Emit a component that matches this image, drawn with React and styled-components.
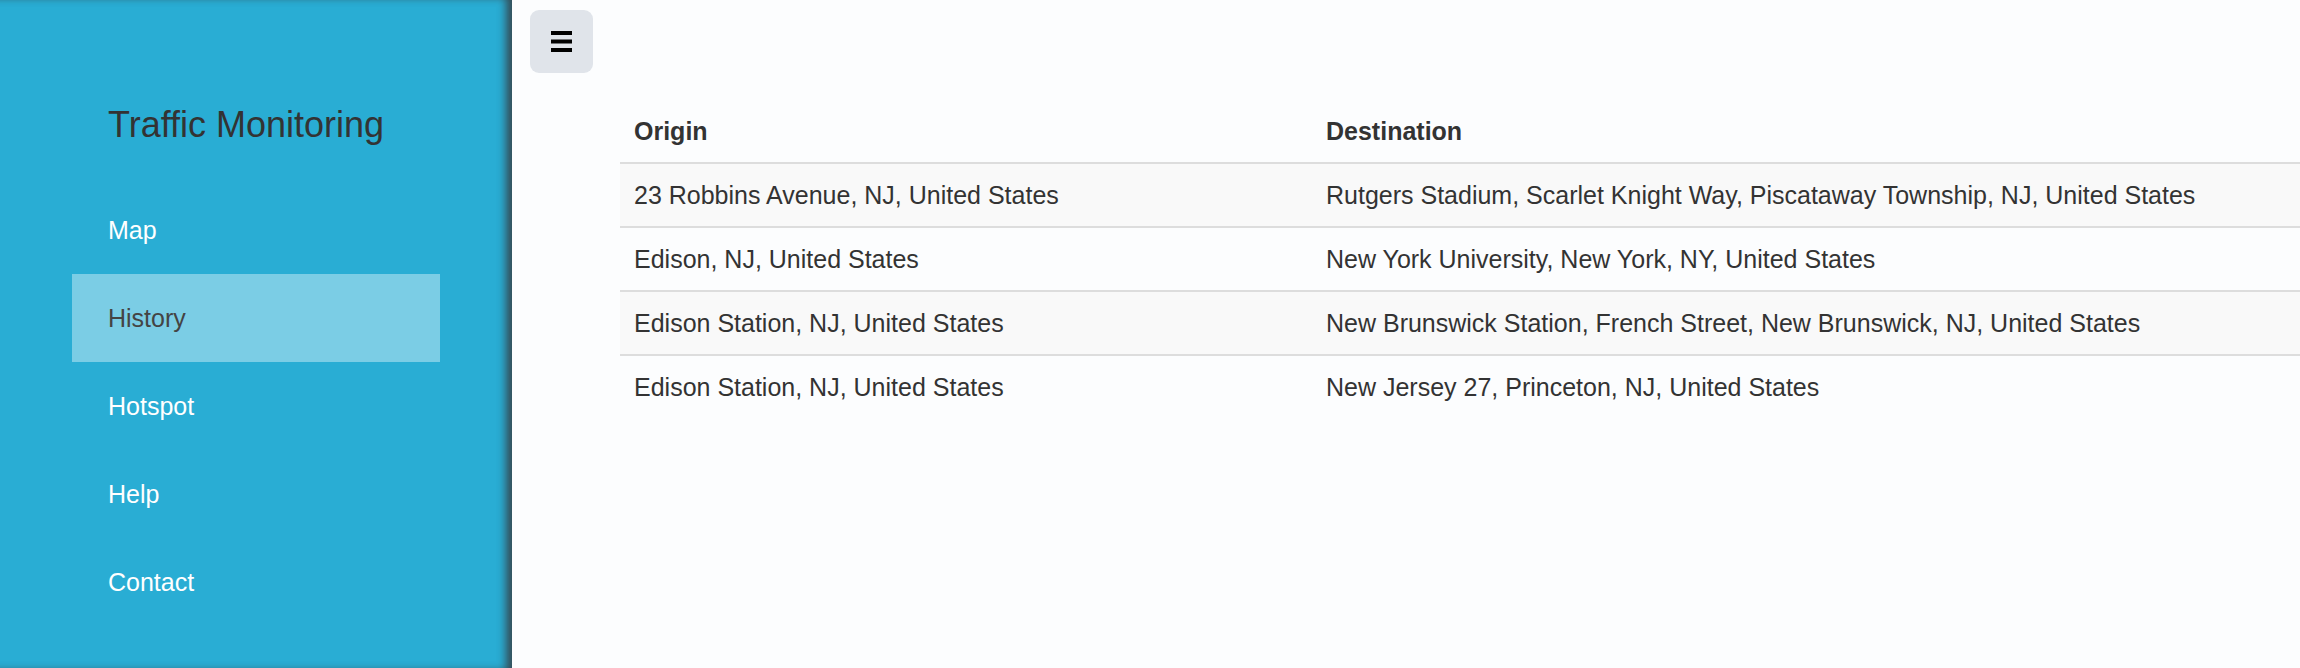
import React, { useState } from 'react';
import styled, { createGlobalStyle } from 'styled-components';

const trips = [
    { origin: '23 Robbins Avenue, NJ, United States', destination: 'Rutgers Stadium, Scarlet Knight Way, Piscataway Township, NJ, United States' },
    { origin: 'Edison, NJ, United States', destination: 'New York University, New York, NY, United States' },
    { origin: 'Edison Station, NJ, United States', destination: 'New Brunswick Station, French Street, New Brunswick, NJ, United States' },
    { origin: 'Edison Station, NJ, United States', destination: 'New Jersey 27, Princeton, NJ, United States' },
];

const links = [ 'Map', 'History', 'Hotspot', 'Help', 'Contact' ];

const App = () => {

    const [ active, setActive ] = useState('History');

    return (
        <>
            <GlobalStyle />
            <Page>
                <Sidebar>
                    <Brand>Traffic Monitoring</Brand>
                    <NavList>
                        { links.map((link) => (
                            <NavItem key={ link } $active={ link === active } onClick={ () => setActive(link) }>
                                { link }
                            </NavItem>
                        )) }
                    </NavList>
                </Sidebar>
                <Main>
                    <MenuButton aria-label="Toggle menu">
                        <svg width="21" height="21" viewBox="0 0 21 21">
                            <rect x="0" y="0" width="21" height="4" fill="#000" />
                            <rect x="0" y="8.5" width="21" height="4" fill="#000" />
                            <rect x="0" y="17" width="21" height="4" fill="#000" />
                        </svg>
                    </MenuButton>
                    <Table>
                        <thead>
                            <tr>
                                <Th $first>Origin</Th>
                                <Th>Destination</Th>
                            </tr>
                        </thead>
                        <tbody>
                            { trips.map((trip, i) => (
                                <Row key={ i } $striped={ i % 2 === 0 }>
                                    <Td>{ trip.origin }</Td>
                                    <Td>{ trip.destination }</Td>
                                </Row>
                            )) }
                        </tbody>
                    </Table>
                </Main>
            </Page>
        </>
    );
};

export default App;

const GlobalStyle = createGlobalStyle`
    html, body, #root {
        margin: 0;
        padding: 0;
        height: 100%;
    }
    body {
        font-family: "Liberation Sans", Arial, sans-serif;
        color: #333;
        background-color: #fcfdfe;
        overflow: hidden;
    }
`;
const Page = styled.div`
    display: flex;
    width: 100%;
    height: 100%;
`;
const Sidebar = styled.div`
    width: 512px;
    flex-shrink: 0;
    background-color: #29add4;
    box-shadow: inset -9px 0 9px -3px rgba(55, 60, 65, 0.85);
    padding-top: 105px;
    box-sizing: border-box;
`;
const Brand = styled.div`
    padding-left: 108px;
    font-size: 36px;
    line-height: 40px;
    color: #333;
    margin-bottom: 41px;
`;
const NavList = styled.div`
    display: flex;
    flex-direction: column;
    width: 368px;
    margin-left: 72px;
`;
const NavItem = styled.div`
    height: 88px;
    display: flex;
    align-items: center;
    padding-left: 36px;
    font-size: 25px;
    color: ${ (p) => (p.$active ? '#444' : '#fff') };
    background-color: ${ (p) => (p.$active ? '#7bcde5' : 'transparent') };
    cursor: pointer;
`;
const Main = styled.div`
    flex: 1;
    display: flex;
    flex-direction: column;
    align-items: flex-start;
    padding: 10px 0 0 18px;
    background-color: #fcfdfe;
`;
const MenuButton = styled.button`
    width: 63px;
    height: 63px;
    border: none;
    border-radius: 9px;
    background-color: #e0e4ea;
    display: flex;
    align-items: center;
    justify-content: center;
    padding: 0;
    cursor: pointer;
`;
const Table = styled.table`
    margin: 27px 0 0 90px;
    width: calc(100% - 90px);
    border-collapse: collapse;
    font-size: 25px;
    line-height: 34px;
    color: #333;
`;
const Th = styled.th`
    text-align: left;
    font-weight: 700;
    padding: 14px;
    width: ${ (p) => (p.$first ? '664px' : 'auto') };
    border-bottom: 2px solid #ddd;
`;
const Row = styled.tr`
    background-color: ${ (p) => (p.$striped ? '#f9f9f9' : 'transparent') };
`;
const Td = styled.td`
    padding: 14px;
    border-top: 2px solid #ddd;
    white-space: nowrap;
`;
